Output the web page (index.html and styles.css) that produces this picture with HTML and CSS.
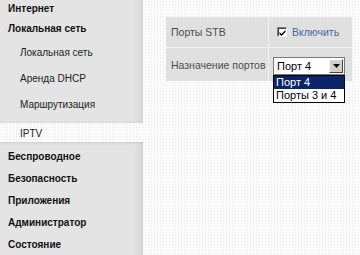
FILE: index.html
```html
<!DOCTYPE html>
<html lang="ru">
<head>
    <meta charset="UTF-8">
    <title>IPTV</title>
    <link rel="stylesheet" href="styles.css">
</head>
<body>
    <div class="page">
        <!-- Menu -->
        <div class="sidebar">
            <div class="menu-group">
                <div class="menu-item first">Интернет</div>
                <div class="menu-item">Локальная сеть</div>
                <div class="sub-item">Локальная сеть</div>
                <div class="sub-item">Аренда DHCP</div>
                <div class="sub-item">Маршрутизация</div>
            </div>
            <div class="sub-item active">IPTV</div>
            <div class="menu-group second">
                <div class="menu-item">Беспроводное</div>
                <div class="menu-item">Безопасность</div>
                <div class="menu-item">Приложения</div>
                <div class="menu-item">Администратор</div>
                <div class="menu-item">Состояние</div>
            </div>
        </div>
        <!-- Settings -->
        <div class="content">
            <div class="settings">
                <div class="row">
                    <div class="label">Порты STB</div>
                    <div class="value">
                        <span class="checkbox">
                            <svg width="7" height="7" viewBox="0 0 7 7"><path d="M0.5 3 L2.5 5 L6.5 1 L6.5 3 L2.5 7 L0.5 5 Z" fill="#000"/></svg>
                        </span>
                        <span class="check-label">Включить</span>
                    </div>
                </div>
                <div class="row">
                    <div class="label">Назначение портов</div>
                    <div class="value">
                        <div class="select-wrap">
                            <div class="select">
                                <span class="select-text">Порт 4</span>
                                <span class="select-btn">
                                    <svg width="7" height="4" viewBox="0 0 7 4"><path d="M0 0 H7 L3.5 4 Z" fill="#000"/></svg>
                                </span>
                            </div>
                            <div class="dropdown">
                                <div class="option selected">Порт 4</div>
                                <div class="option">Порты 3 и 4</div>
                            </div>
                        </div>
                    </div>
                </div>
            </div>
        </div>
    </div>
</body>
</html>
```

FILE: styles.css
```css
* {
    margin: 0;
    padding: 0;
    box-sizing: border-box;
}
body, html {
    height: 100%;
    width: 100%;
}
body {
    font-family: "Liberation Sans", Arial, sans-serif;
    background-color: #fbfbfb;
    background-image: radial-gradient(#e9e9e9 0.7px, transparent 0.9px);
    background-size: 3px 3px;
    overflow: hidden;
}
.page {
    display: flex;
    height: 100%;
}
/* Menu styles */
.sidebar {
    width: 143px;
    flex-shrink: 0;
}
.menu-group {
    background: linear-gradient(to right, #e4e4e4 0, #e4e4e4 134px, #d9d9d9 141px, #d2d2d2 143px);
    padding-bottom: 5px;
    box-shadow: inset 0 -2px 2px -1px rgba(0, 0, 0, 0.06);
}
.menu-group.second {
    padding-top: 4px;
    padding-bottom: 10px;
    box-shadow: inset 0 3px 3px -2px rgba(0, 0, 0, 0.1);
}
.menu-item {
    height: 22px;
    line-height: 22px;
    padding-left: 8px;
    font-size: 10px;
    font-weight: bold;
    color: #111;
}
.menu-item.first {
    height: 18px;
    line-height: 18px;
}
.sub-item {
    height: 26px;
    line-height: 26px;
    padding-left: 20px;
    font-size: 10px;
    color: #222;
}
.sub-item.active {
    height: 19px;
    line-height: 22px;
}
/* Settings styles */
.content {
    flex: 1;
    padding: 17px 0 0 23px;
}
.settings {
    width: 186px;
    background-color: #e0e0e0;
}
.row {
    display: flex;
    border-bottom: 1px solid #f2f2f2;
}
.row:first-child {
    height: 31px;
}
.row:last-child {
    height: 33px;
    border-bottom: none;
}
.label {
    width: 103px;
    border-right: 1px solid #f2f2f2;
    padding-left: 5px;
    display: flex;
    align-items: center;
    font-size: 10.5px;
    color: #4d4d4d;
    white-space: nowrap;
}
.value {
    flex: 1;
    display: flex;
    align-items: center;
    padding-left: 4px;
}
.checkbox {
    width: 10px;
    height: 10px;
    margin-left: 4px;
    background-color: #fff;
    border: 1px solid #808080;
    border-right-color: #fff;
    border-bottom-color: #fff;
    box-shadow: inset 1px 1px 0 #404040;
    display: flex;
    justify-content: center;
    align-items: center;
    padding: 1px 0 0 1px;
}
.check-label {
    margin-left: 5px;
    font-size: 10.5px;
    color: #48679a;
}
.select-wrap {
    position: relative;
    margin-top: 3px;
}
.select {
    width: 72px;
    height: 18px;
    background-color: #fff;
    border: 1px solid #7a7a7a;
    display: flex;
    align-items: stretch;
}
.select-text {
    flex: 1;
    font-size: 11px;
    line-height: 16px;
    padding-left: 3px;
    color: #000;
}
.select-btn {
    width: 14px;
    margin: 1px;
    background-color: #d4d0c8;
    border: 1px solid #fff;
    border-right-color: #404040;
    border-bottom-color: #404040;
    display: flex;
    justify-content: center;
    align-items: center;
}
.dropdown {
    position: absolute;
    top: 18px;
    left: 0;
    width: 72px;
    background-color: #fff;
    border: 1px solid #000;
}
.option {
    height: 13px;
    line-height: 13px;
    padding-left: 2px;
    font-size: 11px;
    color: #000;
    white-space: nowrap;
}
.option.selected {
    background-color: #0a246a;
    color: #fff;
}
```
